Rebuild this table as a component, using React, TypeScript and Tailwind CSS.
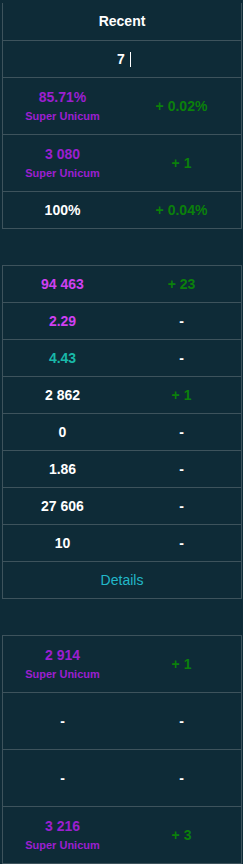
const purple = "text-[#9b1fd0]";
const magenta = "text-[#cf40f2]";
const teal = "text-[#19b9a9]";
const green = "text-[#0b800b]";

type Cell = { value: string; color?: string; rank?: boolean };
type Row = { left: Cell; right: Cell };

const topRows: Row[] = [
  { left: { value: "85.71%", color: purple, rank: true }, right: { value: "+ 0.02%", color: green } },
  { left: { value: "3 080", color: purple, rank: true }, right: { value: "+ 1", color: green } },
  { left: { value: "100%" }, right: { value: "+ 0.04%", color: green } },
];

const midRows: Row[] = [
  { left: { value: "94 463", color: magenta }, right: { value: "+ 23", color: green } },
  { left: { value: "2.29", color: magenta }, right: { value: "-" } },
  { left: { value: "4.43", color: teal }, right: { value: "-" } },
  { left: { value: "2 862" }, right: { value: "+ 1", color: green } },
  { left: { value: "0" }, right: { value: "-" } },
  { left: { value: "1.86" }, right: { value: "-" } },
  { left: { value: "27 606" }, right: { value: "-" } },
  { left: { value: "10" }, right: { value: "-" } },
];

const bottomRows: Row[] = [
  { left: { value: "2 914", color: purple, rank: true }, right: { value: "+ 1", color: green } },
  { left: { value: "-" }, right: { value: "-" } },
  { left: { value: "-" }, right: { value: "-" } },
  { left: { value: "3 216", color: purple, rank: true }, right: { value: "+ 3", color: green } },
];

function StatCell({ cell }: { cell: Cell }) {
  return (
    <div className="flex flex-col items-center justify-center">
      <span className={`text-[14px] font-bold leading-[20px] ${cell.color ?? "text-white"}`}>
        {cell.value}
      </span>
      {cell.rank && (
        <span className={`text-[11px] font-bold leading-[18px] ${purple}`}>Super Unicum</span>
      )}
    </div>
  );
}

function StatRow({ row, tall }: { row: Row; tall?: boolean }) {
  return (
    <div
      className={`grid grid-cols-2 border-t border-[#3d535c] ${tall ? "h-[57px]" : "h-[37px]"}`}
    >
      <StatCell cell={row.left} />
      <StatCell cell={row.right} />
    </div>
  );
}

export default function App() {
  return (
    <div className="min-h-screen bg-[#0e2b37] pt-[3px] pl-[2px] font-['Liberation_Sans',Arial,sans-serif]">
      <div className="w-[240px] border-x border-b border-[#3d535c]">
        <div className="flex h-[37px] items-center justify-center text-[14px] font-bold text-white">
          Recent
        </div>
        <div className="flex h-[37px] items-center justify-center border-t border-[#3d535c] pl-[4px] text-[14px] font-bold text-white">
          <span>7</span>
          <span className="ml-[5px] h-[15px] w-px bg-white" />
        </div>
        {topRows.map((row, i) => (
          <StatRow key={i} row={row} tall={!!row.left.rank} />
        ))}
      </div>

      <div className="mt-[36px] w-[240px] border-x border-b border-[#3d535c]">
        {midRows.map((row, i) => (
          <StatRow key={i} row={row} />
        ))}
        <div className="flex h-[37px] items-center justify-center border-t border-[#3d535c] text-[14px] text-[#22b8c9]">
          Details
        </div>
      </div>

      <div className="mt-[36px] w-[240px] border-x border-b border-[#3d535c]">
        {bottomRows.map((row, i) => (
          <StatRow key={i} row={row} tall />
        ))}
      </div>
    </div>
  );
}
